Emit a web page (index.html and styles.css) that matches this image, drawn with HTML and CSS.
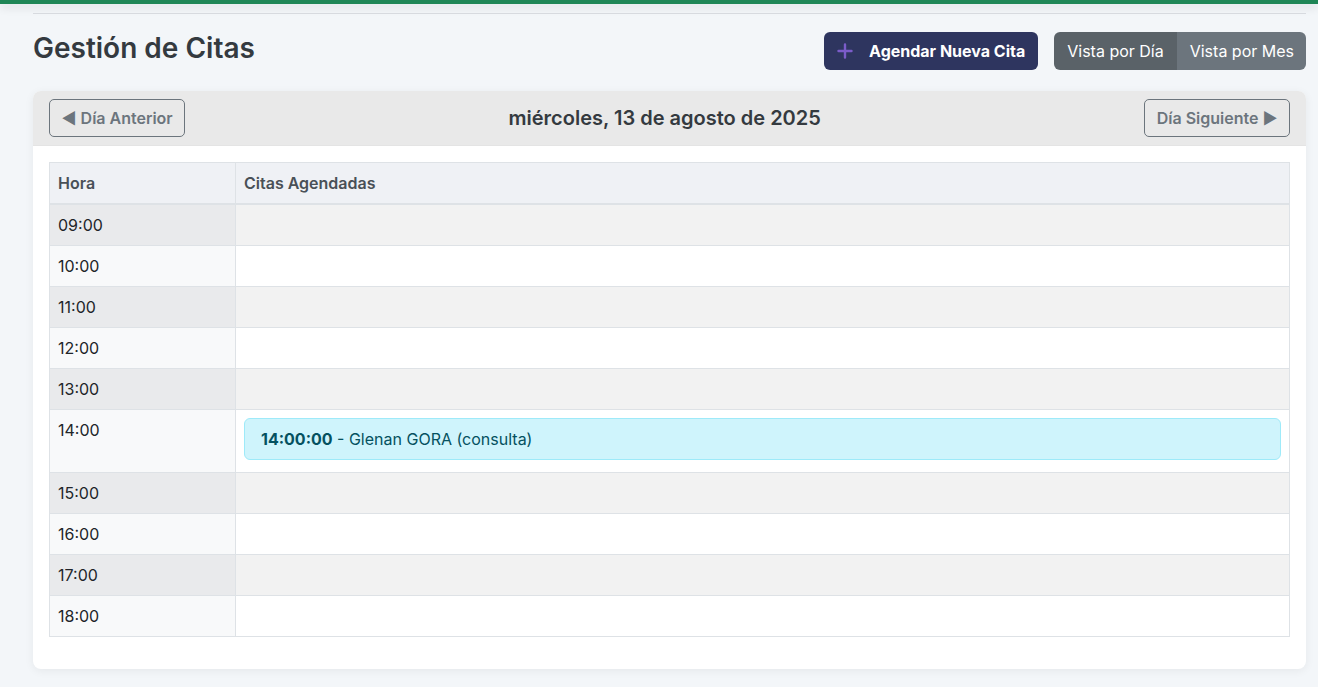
FILE: index.html
```html
<!DOCTYPE html>
<html lang="es">
<head>
<meta charset="utf-8">
<title>Gestión de Citas</title>
<link rel="stylesheet" href="styles.css">
</head>
<body>
<div class="topbar"></div>
<div class="page">
  <div class="rule"></div>
  <div class="head">
    <h1 class="title">Gestión de Citas</h1>
    <div class="actions">
      <button class="btn-new"><svg class="plus" width="16" height="16" viewBox="0 0 16 16"><path d="M8 1.5v13M1.5 8h13" stroke="#7b5cc9" stroke-width="2.4" stroke-linecap="round"/></svg>Agendar Nueva Cita</button>
      <div class="group">
        <button class="seg active">Vista por Día</button>
        <button class="seg">Vista por Mes</button>
      </div>
    </div>
  </div>
  <div class="card">
    <div class="card-head">
      <button class="nav">◀ Día Anterior</button>
      <div class="date">miércoles, 13 de agosto de 2025</div>
      <button class="nav">Día Siguiente ▶</button>
    </div>
    <div class="card-body">
      <table class="sched">
        <thead>
          <tr><th class="c-hour">Hora</th><th>Citas Agendadas</th></tr>
        </thead>
        <tbody>
          <tr class="odd"><td class="c-hour">09:00</td><td></td></tr>
          <tr><td class="c-hour">10:00</td><td></td></tr>
          <tr class="odd"><td class="c-hour">11:00</td><td></td></tr>
          <tr><td class="c-hour">12:00</td><td></td></tr>
          <tr class="odd"><td class="c-hour">13:00</td><td></td></tr>
          <tr><td class="c-hour">14:00</td><td><div class="appt"><b>14:00:00</b> - Glenan GORA (consulta)</div></td></tr>
          <tr class="odd"><td class="c-hour">15:00</td><td></td></tr>
          <tr><td class="c-hour">16:00</td><td></td></tr>
          <tr class="odd"><td class="c-hour">17:00</td><td></td></tr>
          <tr><td class="c-hour">18:00</td><td></td></tr>
        </tbody>
      </table>
    </div>
  </div>
</div>
</body>
</html>
```
FILE: styles.css
```css
* { box-sizing: border-box; }
html, body { margin: 0; padding: 0; }
body {
  background: #f3f6f9;
  font-family: Inter, "Noto Sans", "Liberation Sans", sans-serif;
  color: #212529;
  height: 687px;
  overflow: hidden;
}
.topbar {
  height: 4px;
  background: #1e8555;
  box-shadow: 0 3px 10px rgba(0,0,0,0.14);
  position: relative;
}
.page {
  padding: 0 12px 0 33px;
}
.rule {
  height: 1px;
  margin-top: 9px;
  background: #d9dce1;
}
.head {
  display: flex;
  justify-content: space-between;
  align-items: flex-start;
  margin-top: 18px;
}
.title {
  margin: 0;
  font-size: 28px;
  font-weight: 600;
  color: #343a40;
  line-height: 30px;
  margin-top: 1px;
}
.actions {
  display: flex;
  gap: 16px;
}
button {
  font-family: inherit;
  cursor: pointer;
}
.btn-new {
  height: 38px;
  display: flex;
  align-items: center;
  gap: 16px;
  padding: 0 13px 0 13px;
  background: #2e355f;
  color: #fff;
  border: none;
  border-radius: 6px;
  font-size: 16px;
  font-weight: 700;
}
.group {
  display: flex;
  border-radius: 6px;
  overflow: hidden;
}
.seg {
  height: 38px;
  border: none;
  background: #6c757d;
  color: #fff;
  font-size: 16px;
  padding: 0 12px 0 13px;
}
.seg.active {
  background: #5a6268;
  padding: 0 13px;
}
.card {
  margin-top: 21px;
  background: #fff;
  border-radius: 8px;
  box-shadow: 0 2px 10px rgba(0,0,0,0.06);
  overflow: hidden;
}
.card-head {
  height: 55px;
  background: #e9e9e9;
  display: flex;
  align-items: center;
  justify-content: space-between;
  padding: 0 16px;
  border-bottom: 1px solid #e4e4e4;
}
.nav {
  height: 38px;
  padding: 0 11.5px;
  background: transparent;
  border: 1px solid #6c757d;
  border-radius: 5px;
  color: #6c757d;
  font-size: 16px;
  font-weight: 600;
}
.date {
  font-size: 20px;
  font-weight: 600;
  color: #343a40;
}
.card-body {
  padding: 16px 16px 32px;
}
.sched {
  width: 100%;
  border-collapse: collapse;
  font-size: 16px;
}
.sched th, .sched td {
  border: 1px solid #dee2e6;
  padding: 8px 8px;
  line-height: 24px;
  text-align: left;
  vertical-align: top;
}
.sched th {
  background: #eff1f5;
  font-weight: 600;
  color: #495057;
  padding: 8px 8px;
  height: 41px;
  border-bottom: 2px solid #dee2e6;
}
.sched .c-hour { width: 186px; }
.sched td.c-hour { background: #f8f9fa; }
.sched tr.odd td { background: #f2f2f2; }
.sched tr.odd td.c-hour { background: #e9eaec; }
.appt {
  background: #cff4fc;
  border: 1px solid #9eeaf9;
  border-radius: 6px;
  color: #055160;
  font-size: 16px;
  padding: 8px 16px;
  margin-bottom: 4px;
  line-height: 24px;
}
.appt b { font-weight: 700; }
```
